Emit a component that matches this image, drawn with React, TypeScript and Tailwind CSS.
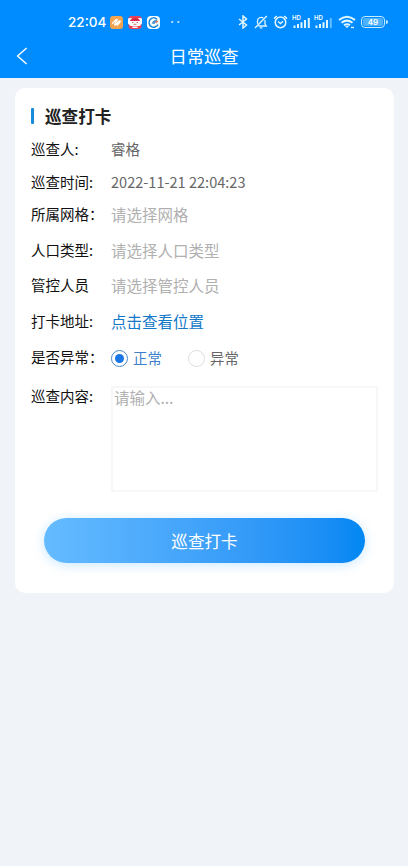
import type { ReactNode } from 'react'

interface FieldProps {
  label: string
  className: string
  children: ReactNode
}

export default function App() {
  return (
    <div className="min-h-screen bg-[#f0f3f7] font-['Noto_Sans_CJK_SC',sans-serif] text-[#111]">
      <header className="h-[78px] bg-[#008cff] text-white">
        <StatusBar />
        <div className="grid h-6 grid-cols-[60px_1fr_60px] items-center">
          <button type="button" aria-label="返回" className="pl-4">
            <svg viewBox="0 0 12 18" className="h-[18px] w-3" fill="none" stroke="currentColor" strokeWidth="1.4">
              <path d="M10.6 1 1.6 9l9 8" />
            </svg>
          </button>
          <h1 className="text-center text-[17.3px] leading-6">日常巡查</h1>
        </div>
      </header>

      <main className="px-[15px] pt-[10px]">
        <section className="h-[505px] w-[379px] rounded-[10px] bg-white px-4 pt-3">
          <div className="flex h-8 items-center">
            <span className="h-4 w-[3px] rounded-[1px] bg-[#168bdc]" />
            <h2 className="ml-[11px] text-[16.6px] font-bold leading-6 text-[#222]">巡查打卡</h2>
          </div>

          <Field label="巡查人:" className="h-[33px]">
            <span className="text-[14.5px] text-[#666]">睿格</span>
          </Field>
          <Field label="巡查时间:" className="h-[33px]">
            <span className="text-[14.55px] text-[#666]">2022-11-21 22:04:23</span>
          </Field>
          <Field label="所属网格：" className="h-8">
            <Placeholder>请选择网格</Placeholder>
          </Field>
          <Field label="人口类型:" className="h-[39px]">
            <Placeholder>请选择人口类型</Placeholder>
          </Field>
          <Field label="管控人员" className="h-8">
            <Placeholder>请选择管控人员</Placeholder>
          </Field>
          <Field label="打卡地址:" className="h-[39px]">
            <a className="pt-px text-[15.5px] text-[#1479c9]">点击查看位置</a>
          </Field>
          <Field label="是否异常：" className="h-[33px]">
            <Radio label="正常" checked />
            <Radio label="异常" />
          </Field>

          <div className="flex pt-[13px]">
            <span className="w-20 shrink-0 text-[14.5px] leading-5">巡查内容:</span>
            <textarea
              placeholder="请输入..."
              className="h-[106px] w-[268px] resize-none border-2 border-[#f7f7f7] pl-px text-[15.5px] leading-[18px] outline-none placeholder:text-[#b0b0b0]"
            />
          </div>

          <button
            type="button"
            className="ml-[13px] mt-[26px] h-[45px] w-[321px] rounded-full bg-linear-to-r from-[#65bbff] to-[#0087f3] pt-px text-[16.6px] text-white shadow-[0_2px_12px_rgba(0,150,255,0.22)]"
          >
            巡查打卡
          </button>
        </section>
      </main>
    </div>
  )
}

function Field({ label, className, children }: FieldProps) {
  return (
    <div className={`flex items-center leading-5 ${className}`}>
      <span className="w-20 shrink-0 text-[14.5px]">{label}</span>
      {children}
    </div>
  )
}

function Placeholder({ children }: { children: ReactNode }) {
  return <span className="text-[15.5px] text-[#b0b0b0]">{children}</span>
}

function Radio({ label, checked = false }: { label: string; checked?: boolean }) {
  return (
    <label className={`flex w-[77px] items-center pt-[3px] text-[14.4px] ${checked ? 'text-[#3c7fcb]' : 'text-[#666]'}`}>
      <span
        className={`mr-[5px] flex size-[17px] items-center justify-center rounded-full border ${checked ? 'border-[#4a86cc]' : 'border-[#ddd]'}`}
      >
        {checked && <span className="size-[9px] rounded-full bg-[#1b76e5]" />}
      </span>
      {label}
    </label>
  )
}

function StatusBar() {
  return (
    <div className="flex h-11 items-center pl-[68px] pr-5">
      <span className="w-[42px] font-[Inter,sans-serif] text-[13.5px] font-medium leading-4">22:04</span>
      <svg viewBox="0 0 13 13" className="size-[13px]">
        <rect width="13" height="13" rx="3" fill="#f2a451" />
        <path
          d="M2.6 7.2 6 3.8q1-.9 1.2.2L4.6 8.6M5.5 9 9 5.2q1.2-.9 1.3.4L7.4 9"
          fill="none"
          stroke="#fff"
          strokeWidth="1.3"
          strokeLinecap="round"
        />
      </svg>
      <svg viewBox="0 0 14 13" className="ml-[5px] h-[13px] w-[14px]">
        <rect x=".5" width="13" height="13" rx="3" fill="#e74258" />
        <path d="M0 2.5 3 2l2 1h4l2-1 3 .5v5L11.5 10h-9L0 7.5Z" fill="#fff" />
        <path d="M2.2 4Q7-1 11.8 4v1H2.2Z" fill="#d82b43" />
        <path d="M4 6.5h1.5M8.5 6.5H10M5.5 8.3h3" stroke="#a55" strokeWidth=".8" />
        <path d="M4.5 10.5h5v1.5h-5Z" fill="#fff" />
      </svg>
      <svg viewBox="0 0 13 13" className="ml-[5px] size-[13px]">
        <rect width="13" height="13" rx="4" fill="#fff" />
        <path d="M10 3.2A4.7 4.7 0 1 0 11 8.5" fill="none" stroke="#1885d4" strokeWidth="1.5" />
        <path d="M4.5 7.5q1.8-3.8 6.2-3.9L7.5 8Z" fill="#4e94cc" />
        <path d="m8.2 5.5 3.2-1-1.5 3Z" fill="#df705b" />
      </svg>
      <svg viewBox="0 0 9 4" className="ml-[11px] h-1 w-[9px]" fill="#c9eeff">
        <circle cx="1.2" cy="2" r="1.1" />
        <circle cx="7.3" cy="2" r="1.1" />
      </svg>

      <div className="ml-auto flex items-center">
        <svg viewBox="0 0 10 14" className="h-[14px] w-[10px]" fill="none" stroke="#e2f6ff" strokeWidth="1.5">
          <path d="m1 4 7.5 6L5 13V1l3.5 3L1 10" />
        </svg>
        <svg viewBox="0 0 14 14" className="ml-[6px] size-[14px]" fill="none" stroke="#e2f6ff" strokeWidth="1.3">
          <path d="M3.5 8.8V6a3.7 3.7 0 0 1 5.8-3M11 5v4l1.3 2H4.5M5.8 12.9h2.5M1 13 12.8 1" />
        </svg>
        <svg viewBox="0 0 15 14" className="ml-[5px] h-[14px] w-[15px]" fill="none" stroke="#e2f6ff" strokeWidth="1.5">
          <circle cx="7.5" cy="7.4" r="5.3" />
          <path d="M1 3.6 3.8 1M14 3.6 11.2 1M5 6.5l2.5 2L10 6.3" />
        </svg>
        <Signal />
        <Signal weak />
        <svg viewBox="0 0 18 14" className="ml-[5px] h-[14px] w-[18px]" fill="none" stroke="#e2f6ff" strokeWidth="2">
          <path d="M1 5.1q8-6.7 16 0M3.5 7.8q5.5-4.4 11 0M6 10.3q3-2.2 6 0" />
          <path d="m7 11 2 2 2-2" fill="#e2f6ff" stroke="none" />
          <path d="M13 12.5h3" strokeWidth="1.4" />
        </svg>
        <div className="ml-[5px] flex h-3 w-6 items-center justify-center rounded-[4px] border border-[#c5ecff] p-px">
          <span className="flex h-full w-full items-center justify-center rounded-[2px] bg-[#4eb2ff] font-[Inter,sans-serif] text-[8px] font-semibold leading-none">
            49
          </span>
        </div>
        <span className="ml-px h-1 w-[2px] rounded-r bg-[#c5ecff]" />
      </div>
    </div>
  )
}

function Signal({ weak = false }: { weak?: boolean }) {
  return (
    <div className={`relative h-[13px] w-[19px] ${weak ? 'ml-[3px]' : 'ml-[4px]'}`}>
      <span className="absolute -top-px left-0 font-[Inter,sans-serif] text-[6px] font-semibold leading-[6px]">HD</span>
      <svg viewBox="0 0 19 13" className="size-full" stroke="#e2f6ff" strokeWidth="2">
        <path d="M2.5 12V9.5M6 12V8M9.5 12V6.3M13 12V4" />
        <path d="M16.8 12V2" opacity={weak ? 0.45 : 1} />
      </svg>
    </div>
  )
}
